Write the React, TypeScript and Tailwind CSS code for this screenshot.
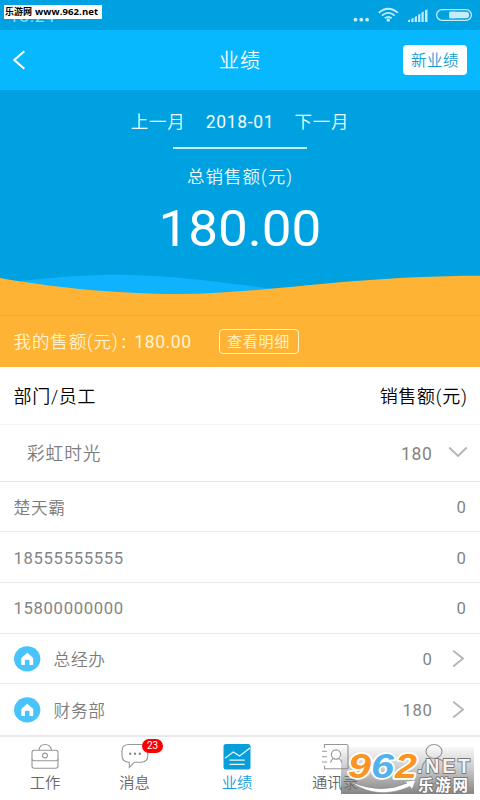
interface StaffRow {
  name: string;
  amount: string;
  department?: boolean;
}

const rows: StaffRow[] = [
  { name: '楚天霸', amount: '0' },
  { name: '18555555555', amount: '0' },
  { name: '15800000000', amount: '0' },
  { name: '总经办', amount: '0', department: true },
  { name: '财务部', amount: '180', department: true },
]

const StatusBar = () => (
  <div className="relative h-[30px] bg-[#00a1e1] text-[#c4ecfb]">
    <div className="h-[24px] pl-[9px] text-[17px] leading-[32px] tracking-[0.8px] text-[#8fdcf8]">
      18:24
    </div>
    <div className="absolute left-1 top-[5px] flex h-[14px] w-[98px] items-center whitespace-nowrap bg-white pl-px font-['Open_Sans','Noto_Sans_CJK_SC',sans-serif] text-[9px] font-bold text-black">
      <span>乐游网</span>
      <span className="ml-[3px] text-[9.5px] tracking-[0.1px]">www.962.net</span>
    </div>
    <svg className="absolute right-0 top-0" width="130" height="30" viewBox="350 0 130 30" fill="none">
      <g fill="currentColor">
        <circle cx="355.5" cy="19.7" r="1.9" />
        <circle cx="361.3" cy="19.7" r="1.9" />
        <circle cx="367.1" cy="19.7" r="1.9" />
        <circle cx="388.3" cy="20" r="1.8" />
        <path d="M408 22v-1.8l2-.6V22zM411.3 22v-3.2l2.2-.8v4zM414.7 22v-5l2.2-1v6zM418.1 22v-7.2l2.2-1V22zM421.5 22v-9.6l2.2-1V22zM425 22V10.2l2.5-1V22z" />
        <rect x="449.3" y="11.7" width="19.8" height="6.6" rx="3" />
        <rect x="449.3" y="11.7" width="6" height="6.6" />
      </g>
      <g stroke="currentColor" strokeWidth="1.8">
        <path d="M378.8 12.8q9.5-8 19 0M381.9 15.6q6.4-5.4 12.8 0M384.9 18.2q3.4-2.7 6.8 0" />
        <rect x="436.6" y="9.6" width="34.8" height="10.8" rx="5.4" strokeWidth="1.3" />
      </g>
    </svg>
  </div>
)

const NavBar = () => (
  <header className="flex h-[60px] items-center justify-between bg-[#08b8ff] pl-3 pr-[13px] text-white">
    <svg className="w-[65px]" width="65" height="20" viewBox="0 0 65 20" fill="none" stroke="currentColor" strokeWidth="2.1">
      <path d="M12.3 1.3 2.3 10l10 8.7" />
    </svg>
    <h1 className="pt-[2px] text-[20px] font-[350] tracking-[1px]">业绩</h1>
    <button className="h-[30px] w-[64px] rounded-[4px] bg-white pt-[3px] text-[15.5px] font-[350] tracking-[0.5px] text-[#159bd2]">
      新业绩
    </button>
  </header>
)

const Summary = () => (
  <section className="relative h-[277px] bg-[#00a1e1] text-[#f0fcff]">
    <svg className="absolute left-0 top-[180px]" width="480" height="97" viewBox="0 270 480 97">
      <path d="M20 281C60 277 85 274.8 115 274.8C165 274.8 210 281 275 289L240 298H80Z" fill="#0fb2fd" />
      <path d="M0 278C50 287 115 294 180 294C260 294 350 275.7 480 275.7V367H0Z" fill="#ffb335" />
      <path d="M0 315.5H480" stroke="#f0a92f" />
    </svg>
    <div className="relative flex h-full flex-col items-center">
      <div className="mt-[19px] flex h-[26px] items-center gap-[20px] text-[17.5px] font-[350] tracking-[0.8px]">
        <span>上一月</span>
        <span className="font-normal tracking-[0.7px]">2018-01</span>
        <span>下一月</span>
      </div>
      <div className="mt-[12px] h-[2px] w-[134px] bg-[#c9f1fd]" />
      <div className="mt-[15px] h-[26px] text-[17.5px] font-[350] leading-[26px] tracking-[1px]">总销售额(元)</div>
      <div className="mt-[9px] h-[60px] scale-x-[1.06] text-[50px] leading-[60px] text-white">180.00</div>
      <div className="mt-auto flex h-[50px] w-full items-center pl-[13.5px] text-[17.5px] font-[350] text-[#fff3cf]">
        <span className="w-[205px] whitespace-nowrap pt-px tracking-[0.9px]">
          我的售额(元)<span className="ml-[3px] mr-[2px] font-medium">:</span> <span className="font-normal tracking-[0.6px]">180.00</span>
        </span>
        <button className="mb-px h-[25px] w-[80px] rounded-[4px] border-[1.5px] border-[#fff3cf] pt-px text-[15px] leading-[22px] tracking-[0.8px]">
          查看明细
        </button>
      </div>
    </div>
  </section>
)

const HomeBadge = () => (
  <svg className="mr-[13px]" width="27" height="26" viewBox="0 0 27 26">
    <ellipse cx="13.2" cy="12.8" rx="13.2" ry="12.6" fill="#48c3fc" />
    <path d="M13.3 6.8 7.3 12.1v6.2q0 .8.8.8h2.8v-4.3q0-1 1-1h2.6q1 0 1 1v4.3h2.9q.8 0 .8-.8v-6.2z" fill="#fff" />
  </svg>
)

const StaffItem = ({ name, amount, department }: StaffRow) => (
  <li className="flex h-[50.7px] items-center border-b border-[#e9e9e9] px-[13.5px] text-[#848484] last:border-b-0">
    {department && <HomeBadge />}
    <span className={/^\d/.test(name) ? 'pt-[2px] text-[16.7px] tracking-[0.65px]' : 'pt-[4px] text-[16.7px] font-[350] tracking-[0.7px] text-[#7c7c7c]'}>
      {name}
    </span>
    <span className="ml-auto pt-[2px] text-[16.7px] tracking-[0.6px]">{amount}</span>
    {department && (
      <svg className="ml-[18px] mr-px" width="15" height="18" viewBox="0 0 15 18" fill="none" stroke="#b5b5b5" strokeWidth="1.9">
        <path d="M2.2 0.8 12 8.6l-9.8 7.8" />
      </svg>
    )}
  </li>
)

const Watermark = () => (
  <svg className="absolute bottom-[6px] left-[341px]" width="133" height="47" viewBox="0 0 133 47">
    <defs>
      <linearGradient id="shade" x1="0" y1="0" x2="0" y2="1">
        <stop offset="0" stopColor="#777" stopOpacity="0.05" />
        <stop offset="0.45" stopColor="#777" stopOpacity="0.38" />
        <stop offset="1" stopColor="#707070" stopOpacity="0.85" />
      </linearGradient>
    </defs>
    <rect width="133" height="47" fill="url(#shade)" />
    <path d="M9 34.5Q40 48 66 36L62 34.5L75 33L71 42.5L69 39.5Q36 54 9 34.5Z" fill="#fff" stroke="#888" strokeWidth="0.6" />
    <g fontFamily="Liberation Sans" fontWeight="bold" strokeLinejoin="round">
      <g fontSize="35" fontStyle="italic" stroke="#fff" strokeWidth="3.4" paintOrder="stroke">
        <text x="7" y="31" fill="#fb9522" textLength="23" lengthAdjust="spacingAndGlyphs">9</text>
        <text x="30" y="31" fill="#52b2ec" textLength="23" lengthAdjust="spacingAndGlyphs">6</text>
        <text x="54" y="31" fill="#fb9522" textLength="22" lengthAdjust="spacingAndGlyphs">2</text>
      </g>
      <text x="76" y="26" fontSize="19.5" fill="#f2f2f2" stroke="#777" strokeWidth="1.8" paintOrder="stroke" textLength="53" lengthAdjust="spacing">.NET</text>
    </g>
    <text x="77" y="43.5" fontFamily="Noto Sans CJK SC" fontWeight="bold" fontSize="15.5" fill="#fff" stroke="#777" strokeWidth="1.8" paintOrder="stroke" textLength="50">乐游网</text>
  </svg>
)

const TabBar = () => (
  <nav className="flex h-[65px] border-t-2 border-[#e9e9e9] bg-white text-[15.3px] font-[350] text-[#666]">
    <div className="flex w-[90px] flex-col items-center pt-[6px]">
      <svg width="28" height="28" viewBox="0 0 28 28" fill="none" stroke="#969696" strokeWidth="1.1">
        <path d="M8 7.2Q8.5 1.5 14 1.5T20.5 7.2" />
        <rect x="1" y="7.3" width="26" height="18" rx="2.2" />
        <path d="M1 16q0 1.7 2 1.7h22q2 0 2-1.7" />
        <circle cx="14" cy="12.5" r="2.4" />
      </svg>
      <span className="leading-[25px]">工作</span>
    </div>
    <div className="relative flex w-[89px] flex-col items-center pt-[6px]">
      <svg width="28" height="28" viewBox="0 0 28 28" fill="none" stroke="#969696" strokeWidth="1.1">
        <path d="M8.2 1.5h11.6q7 0 7 6.5v4.5q0 6.7-7 6.7h-6.3l-5.2 5.3v-5.3Q1 19 1 12.5V8q0-6.5 7.2-6.5z" />
        <g fill="#888" stroke="none">
          <circle cx="9.2" cy="10.8" r="1.2" />
          <circle cx="14" cy="10.8" r="1.2" />
          <circle cx="18.8" cy="10.8" r="1.2" />
        </g>
      </svg>
      <span className="leading-[25px]">消息</span>
      <span className="absolute left-[52px] top-[2px] h-[14px] w-[21px] rounded-full bg-[#fa0000] text-center font-[Roboto] text-[10px] font-normal leading-[14px] text-white">
        23
      </span>
    </div>
    <div className="flex w-[116px] flex-col items-center pt-[6px] text-[#129cd8]">
      <svg width="28" height="28" viewBox="0 0 28 28" fill="none">
        <rect x="0.5" y="1" width="27" height="25.5" rx="2.5" fill="#079eda" />
        <path d="M2 15.2 10.3 9l6.3 4L27 5M6.5 17.2h15.2M6.5 21.4h15.2" stroke="#e7faff" strokeWidth="1.2" />
      </svg>
      <span className="leading-[25px]">业绩</span>
    </div>
    <div className="flex w-[80px] flex-col items-center pt-[6px]">
      <svg width="28" height="28" viewBox="0 0 28 28" fill="none" stroke="#969696" strokeWidth="1.1">
        <path d="M3.5 5V1.5h22q1.5 0 1.5 1.5v21.5q0 1.3-1.5 1.3h-22v-3M1 8.2h5M1 13.7h5M1 19h5" />
        <circle cx="15" cy="11.5" r="4.6" />
        <path d="M9.5 19.5q1-3.5 3.3-4M17.2 15.5q2.7.5 3.5 4" />
      </svg>
      <span className="leading-[25px]">通讯录</span>
    </div>
    <div className="flex w-[105px] flex-col items-center pl-[12px] pt-[6px]">
      <svg width="28" height="28" viewBox="0 0 28 28" fill="none" stroke="#969696" strokeWidth="1.1">
        <ellipse cx="14" cy="8.5" rx="8" ry="7" />
        <path d="M2 26q1-9 8-10M26 26q-1-9-8-10" />
      </svg>
    </div>
  </nav>
)

const App = () => {
  return (
    <div className="relative flex h-[800px] w-[480px] flex-col overflow-hidden bg-white font-[Roboto,'Noto_Sans_CJK_SC',sans-serif]">
      <StatusBar />
      <NavBar />
      <Summary />
      <main className="flex-1">
        <div className="flex h-[58px] items-center justify-between border-b border-[#f3f3f3] px-[13.5px] pt-[3px] text-[18px] font-[350] tracking-[0.7px] text-black">
          <span>部门/员工</span>
          <span className="-mr-[1px]">销售额(元)</span>
        </div>
        <div className="flex h-[57px] items-center border-b border-[#e5e5e5] pl-[27px] pr-[12.5px] text-[#848484]">
          <span className="pt-[4px] text-[17.7px] font-[350] tracking-[0.9px] text-[#7c7c7c]">彩虹时光</span>
          <span className="ml-auto pt-[2px] text-[17.5px] tracking-[0.7px]">180</span>
          <svg className="ml-[15px]" width="20" height="14" viewBox="0 0 20 14" fill="none" stroke="#b5b5b5" strokeWidth="1.9">
            <path d="M1.2 1.5 10 10 18.8 1.5" />
          </svg>
        </div>
        <ul>
          {rows.map((row) => (
            <StaffItem key={row.name} {...row} />
          ))}
        </ul>
      </main>
      <TabBar />
      <Watermark />
    </div>
  )
}

export default App
